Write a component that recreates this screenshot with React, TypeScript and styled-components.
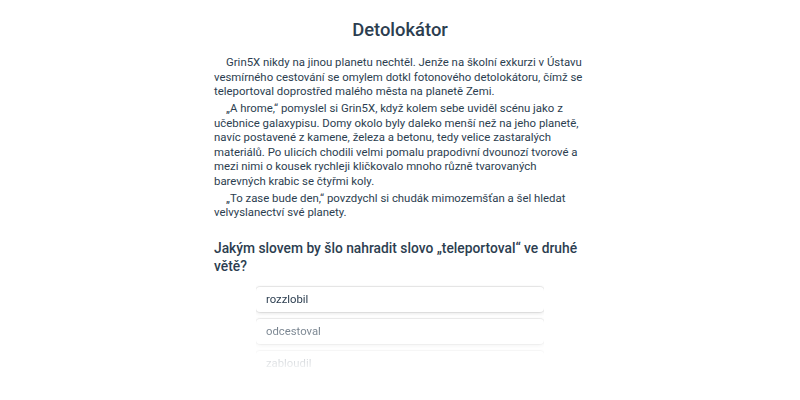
import styled, { createGlobalStyle } from "styled-components";

const GlobalStyle = createGlobalStyle`
  html, body {
    margin: 0;
    padding: 0;
    background: #ffffff;
  }
  body {
    font-family: Roboto, "Noto Sans", sans-serif;
    color: #2c3e50;
  }
`;

const Page = styled.div`
  height: 400px;
  overflow: hidden;
`;

const Container = styled.div`
  width: 372px;
  margin: 0 auto;
  padding-top: 17px;
`;

const Title = styled.h1`
  margin: 0 0 12px;
  text-align: center;
  font-size: 18.4px;
  font-weight: 500;
  line-height: 26px;
`;

const Paragraph = styled.p`
  margin: 0 0 2.5px;
  font-size: 11.4px;
  line-height: 14.5px;
  text-indent: 12px;
`;

const Question = styled.h2`
  margin: 19px 0 10px;
  font-size: 13.8px;
  font-weight: 500;
  line-height: 18px;
`;

const Options = styled.div`
  width: 288px;
  margin: 0 auto;
  padding-top: 2px;
  display: flex;
  flex-direction: column;
  gap: 7px;
  mask-image: linear-gradient(to bottom, #000 0px, #000 22px, transparent 88px);
`;

const Option = styled.div`
  height: 25px;
  display: flex;
  align-items: center;
  padding: 0 10px;
  border-radius: 4px;
  background: #fff;
  box-shadow: 0 0 0 1px rgba(0, 0, 0, 0.07), 0 1px 4px rgba(0, 0, 0, 0.14);
  font-size: 11.3px;
`;

const paragraphs = [
  "Grin5X nikdy na jinou planetu nechtěl. Jenže na školní exkurzi v Ústavu vesmírného cestování se omylem dotkl fotonového detolokátoru, čímž se teleportoval doprostřed malého města na planetě Zemi.",
  "„A hrome,“ pomyslel si Grin5X, když kolem sebe uviděl scénu jako z učebnice galaxypisu. Domy okolo byly daleko menší než na jeho planetě, navíc postavené z kamene, železa a betonu, tedy velice zastaralých materiálů. Po ulicích chodili velmi pomalu prapodivní dvounozí tvorové a mezi nimi o kousek rychleji kličkovalo mnoho různě tvarovaných barevných krabic se čtyřmi koly.",
  "„To zase bude den,“ povzdychl si chudák mimozemšťan a šel hledat velvyslanectví své planety.",
];

const options = ["rozzlobil", "odcestoval", "zabloudil"];

export default function App() {
  return (
    <Page>
      <GlobalStyle />
      <Container>
        <Title>Detolokátor</Title>
        {paragraphs.map((p) => (
          <Paragraph key={p}>{p}</Paragraph>
        ))}
        <Question>Jakým slovem by šlo nahradit slovo „teleportoval“ ve druhé větě?</Question>
        <Options>
          {options.map((o) => (
            <Option key={o}>{o}</Option>
          ))}
        </Options>
      </Container>
    </Page>
  );
}
